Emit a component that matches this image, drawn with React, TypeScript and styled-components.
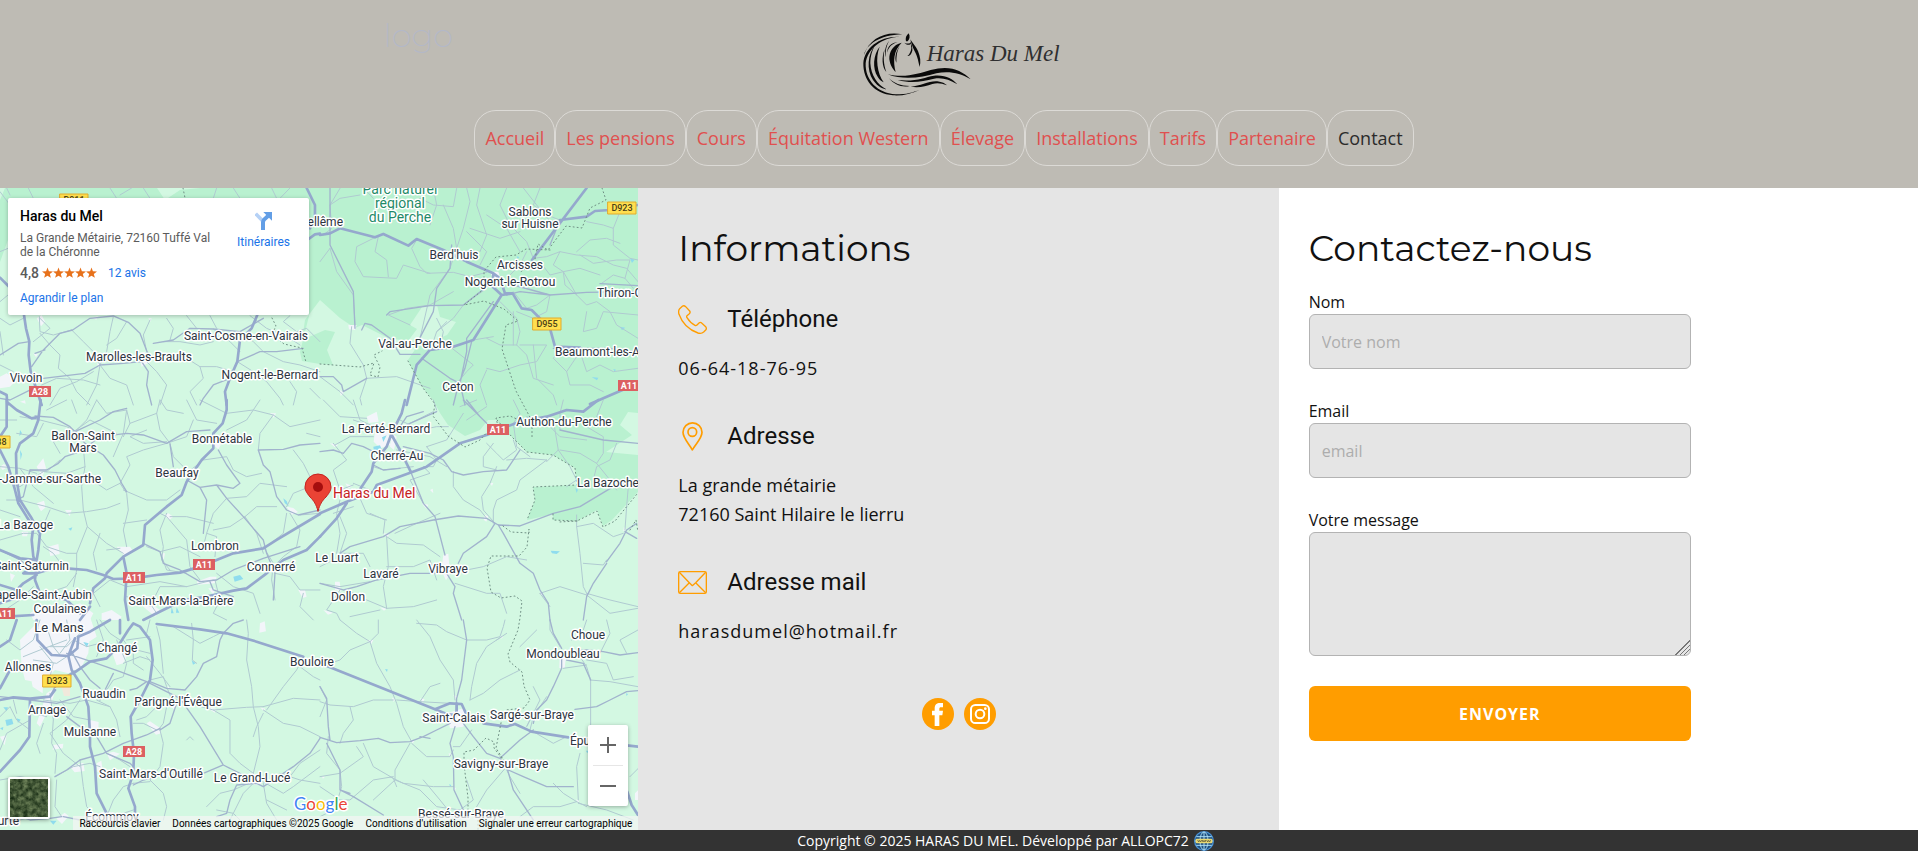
import React from "react";
import styled, { createGlobalStyle } from "styled-components";

const GlobalStyle = createGlobalStyle`
  *, *::before, *::after { box-sizing: border-box; }
  body {
    margin: 0;
    background: #fff;
    color: #111;
    font-family: "Open Sans", "Noto Sans", sans-serif;
    font-size: 16px;
  }
  h1, h2, h3, p { margin: 0; font-weight: 400; }
  a { color: inherit; text-decoration: none; }
`;

const ORANGE = "#ff9d00";

/* ---------- header ---------- */

const Header = styled.header`
  display: grid;
  grid-template-columns: 1fr auto 1fr;
  row-gap: 5px;
  padding: 20px 0 22px;
  background: #bebbb4;
`;

const SiteMark = styled.a`
  justify-self: start;
  padding-left: 20vw;
  color: #b3b8c8;
  font: 200 32px/32px Montserrat, Inter, sans-serif;
`;

const Brand = styled.a`
  display: block;
  grid-column: 2;
  height: 85px;
`;

const Nav = styled.nav`
  grid-column: 1 / -1;
  display: flex;
  flex-wrap: wrap;
  justify-content: center;
  padding-right: 30px;
`;

const NavLink = styled.a<{ $current?: boolean }>`
  padding: 0 10px;
  border: 1px solid #dcdad6;
  border-radius: 22px;
  color: ${(p) => (p.$current ? "#2b2b2b" : "#e0504f")};
  font-size: 18px;
  line-height: 54px;
`;

/* ---------- three columns ---------- */

const Columns = styled.main`
  display: grid;
  grid-template-columns: repeat(3, 1fr);
  min-height: 642px;
`;

const Info = styled.section`
  padding: 38px 39px;
  background: #e5e5e5;
`;

const Contact = styled.section`
  padding: 38px 30px;
  background: #fff;
`;

const Title = styled.h2`
  font: 400 36px/44px Montserrat, Inter, sans-serif;
  color: #111;
`;

const InfoBlock = styled.div<{ $first?: boolean }>`
  margin-top: ${(p) => (p.$first ? 34 : 38)}px;
`;

const InfoHead = styled.div`
  display: flex;
  align-items: center;
  gap: 20px;
  height: 30px;
`;

const InfoTitle = styled.h3`
  font: 400 24px/30px Roboto, sans-serif;
`;

const InfoText = styled.p<{ $spaced?: boolean }>`
  margin-top: 20px;
  font-size: 18px;
  line-height: 29px;
  letter-spacing: ${(p) => (p.$spaced ? "1px" : "normal")};
`;

const Social = styled.div`
  display: flex;
  justify-content: center;
  gap: 10px;
  margin-top: 52px;
`;

const SocialLink = styled.a`
  display: block;
  width: 32px;
  height: 32px;
`;

const Form = styled.form`
  display: flex;
  flex-direction: column;
  gap: 30px;
  width: 66%;
  margin-top: 20px;
`;

const Field = styled.div`
  display: flex;
  flex-direction: column;
`;

const Label = styled.label`
  font-size: 16px;
  line-height: 24px;
`;

const Input = styled.input`
  width: 100%;
  height: 55px;
  padding: 0 12px;
  border: 1px solid #b3b3b3;
  border-radius: 6px;
  background: #e5e5e5;
  color: #111;
  font: inherit;
  &::placeholder { color: #adadad; opacity: 1; }
`;

const TextArea = styled.textarea`
  display: block;
  width: 100%;
  height: 124px;
  padding: 10px 12px;
  border: 1px solid #b3b3b3;
  border-radius: 6px;
  background: #e5e5e5;
  color: #111;
  font: inherit;
  &::-webkit-resizer {
    background: linear-gradient(
      135deg,
      transparent 50%, #777 50%, #777 55%,
      transparent 55%, transparent 64%, #777 64%, #777 69%,
      transparent 69%, transparent 78%, #777 78%, #777 83%, transparent 83%
    );
  }
`;

const Submit = styled.button`
  height: 55px;
  border: 0;
  border-radius: 6px;
  background: ${ORANGE};
  color: #fff;
  font: 700 16px/24px "Open Sans", sans-serif;
  letter-spacing: 1px;
`;

const Footer = styled.footer`
  display: flex;
  align-items: center;
  justify-content: center;
  gap: 5px;
  height: 21px;
  padding-left: 93px;
  background: #333;
  color: #fff;
  font-size: 14px;
  line-height: 22px;
`;

/* ---------- map ---------- */

const MapFrame = styled.section`
  position: relative;
  overflow: hidden;
  border-right: 1px solid #e5e5e5;
  background: #d3f8e2;
  font-family: Roboto, sans-serif;
`;

const MapCanvas = styled.svg`
  position: absolute;
  inset: 0;
  width: 100%;
  height: 100%;
`;

const PlaceCard = styled.div`
  position: absolute;
  top: 10px;
  left: 8px;
  display: flex;
  justify-content: space-between;
  width: 301px;
  height: 117px;
  padding: 9px 19px 9px 12px;
  border-radius: 2px;
  background: #fff;
  box-shadow: 0 1px 4px rgba(0, 0, 0, 0.25);
  color: #5b5b5b;
  font-size: 12px;
  line-height: 14px;
`;

const PlaceText = styled.div`
  width: 194px;
`;

const PlaceName = styled.h2`
  margin-bottom: 6px;
  color: #000;
  font: 500 14px/18px Roboto, sans-serif;
`;

const Rating = styled.div`
  display: flex;
  align-items: center;
  height: 14px;
  margin: 7px 0 11px;
`;

const Score = styled.span`
  margin-right: 3px;
  font-size: 14px;
  font-weight: 500;
`;

const MapLink = styled.a`
  color: #1a73e8;
`;

const Reviews = styled(MapLink)`
  margin-left: 11px;
`;

const Directions = styled(MapLink)`
  display: flex;
  flex-direction: column;
  align-items: center;
  gap: 5px;
  padding-top: 5px;
`;

const ZoomBox = styled.div`
  position: absolute;
  right: 10px;
  bottom: 24px;
  width: 40px;
  background: #fff;
  border-radius: 2px;
  box-shadow: 0 1px 4px rgba(0, 0, 0, 0.3);
`;

const ZoomButton = styled.button`
  display: flex;
  align-items: center;
  justify-content: center;
  width: 40px;
  height: 40px;
  padding: 0;
  border: 0;
  background: none;
`;

const ZoomRule = styled.div`
  height: 1px;
  margin: 0 5px;
  background: #e6e6e6;
`;

const Satellite = styled.button`
  position: absolute;
  left: 8px;
  bottom: 11px;
  width: 42px;
  height: 42px;
  padding: 0;
  overflow: hidden;
  border: 2px solid #fff;
  border-radius: 2px;
  background: #41573f;
  box-shadow: 0 1px 4px rgba(0, 0, 0, 0.4);
`;

const Credits = styled.div`
  position: absolute;
  right: 0;
  bottom: 0;
  display: flex;
  height: 14px;
  background: rgba(245, 245, 245, 0.7);
  color: #000;
  font-size: 10px;
  line-height: 16px;
  white-space: nowrap;
`;

const CreditButton = styled.button`
  padding: 0 6px;
  border: 0;
  background: none;
  color: inherit;
  font: inherit;
`;

const Credit = styled.span`
  padding: 0 6px;
`;

/* Road tiles: every tile is drawn at three units per pixel. */
type Tile = {
  x: number;
  y: number;
  urban: string;
  water?: string;
  minor: string;
  mid: string;
  major: string;
};

const TILES: Tile[] = [
  {
    x: 0,
    y: 185,
    urban: "M0,575l20,-10l30,20l-20,20l-30,5zM110,400l15,-10l10,20l-12,14zM275,398l20,-4l-6,10zM445,400l10,0l-4,10zM415,505l20,-5l15,30l-25,15zM60,650l15,-4l2,10zM290,535l16,2l-8,12zM100,505l14,2l-6,10z",
    minor:
      "M0,20L30,60M20,9L30,30M85,9L100,40M330,9L350,40M360,30L395,9M430,9L450,40M640,40L650,9M700,9L720,40M815,9L830,40M840,40L870,9M0,200L24,190M0,350L24,330M118,395L120,440L160,450L215,435M0,400L30,420L70,400M10,510L0,440M120,445L150,480L180,510L175,550L210,580L230,620L270,660M215,435L250,470L280,500L300,540L290,600L260,660M340,395L330,440L320,500L300,540L330,580L380,600L400,660M150,660L180,610L230,590L280,560M450,405L430,450L440,500L480,530L560,520L600,545L610,580L570,620L590,660M430,520L470,560L500,600L480,660M490,470L540,470L600,480L640,470M720,440L760,470L790,500L850,530L900,540L960,560M720,500L690,470L640,432M750,392L800,430L870,460L900,480M700,560L650,545L600,545M712,530L760,560L800,590L840,640L850,660M870,392L850,410L890,440L920,430L960,470M100,470L150,430L120,400M125,600L170,580L250,585L300,600M0,540L40,560M380,410L350,460L320,480M500,400L520,430L510,465M560,392L590,430M630,392L650,430M870,590L890,620L880,660M930,610L960,640",
    mid: "M95,545L130,495L180,445L218,435L270,400L340,393L385,412L420,445L445,510M460,475L520,465L570,430L640,432L720,440L790,400M0,510L55,475L88,470M105,505L135,495M425,530L370,535L300,540L255,565L130,580M425,530L445,560L440,600L455,660M690,580L640,600L610,640L600,660M712,530L780,500L830,500L910,490M0,640L30,645L100,610",
    major: "M0,278L28,306M72,390L78,430L88,470L86,510L92,560L105,600L125,660M920,9L945,60L945,100L930,130M922,165L945,148L960,146M772,390L755,430L720,465L712,530L690,580L675,620L680,660M0,620L20,630L22,660",
  },
  {
    x: 320,
    y: 185,
    urban: "M85,420l25,0l-5,15l-18,-2zM60,615l12,8l-10,10zM290,455l25,8l-10,20l-22,-6zM510,260l25,0l10,30l-20,4z",
    water: "M930,220l14,4l-8,10zM900,425l16,3l-10,8zM880,552l8,2l-4,6zM815,576l20,2l-4,8zM590,214l8,2l-5,6z",
    minor:
      "M60,10L30,60L35,130L10,150M30,60L60,40L120,30M130,9L160,40M270,65L300,40L340,60L400,65L410,10M440,9L450,50L430,130L410,190L390,250L330,330L300,460M175,155L165,200L200,225L205,275M190,145L110,185L105,230L130,275L230,280L250,240L330,265M290,165L275,190L300,245L320,265L400,262L450,275L500,262M340,9L350,60L330,120M370,60L400,130L410,190M480,9L470,60L500,150L480,200M500,90L560,130L600,200M560,9L540,60L570,120L620,170L640,220M450,130L540,160L600,140M610,9L650,60L700,120M660,9L640,60L680,90L720,105M640,220L680,215L720,200L770,210L830,215L880,240L920,250L954,290M660,230L690,270L730,260L780,250L840,270M720,200L700,240L730,260L735,300L770,330M770,200L810,165L860,160L900,175M800,110L850,120L880,130L880,180L930,220L954,225M880,130L900,80M780,210L820,235L890,225L930,225L915,280L940,310M845,295L880,270L915,280M690,330L680,380L640,400L590,380M580,320L620,370L650,360L690,330M730,260L770,330L800,360L830,350L870,380L890,420L954,460M540,350L590,400L600,440L590,480L620,510L640,580L700,600M580,380L580,480M600,480L680,480L650,530L600,540L540,560L500,550M640,480L650,580L700,630L710,660M780,500L740,560L750,600L810,600L850,620M780,500L800,560L840,540L880,560L954,550M740,560L700,520L720,490M800,380L790,440L830,430L850,380L954,390M500,460L540,480L590,480M460,465L520,455M390,485L460,540L440,560L415,590M270,420L205,390L260,370L330,360L400,320M350,440L400,400L430,360L500,310M340,470L350,440L380,410M30,190L50,260L100,330L105,420M0,230L30,190M95,425L90,475L130,540L140,580L120,640L125,660M0,575L60,620L100,660M140,580L230,575L330,610M360,490L370,440L350,400M500,555L480,600L500,660M440,140L500,200L480,240M570,270L600,240L620,200",
    mid: "M125,435L135,415L155,420L210,460L240,508L300,508M305,520L390,580L420,595L435,660M520,350L440,460L440,500L420,595M0,575L40,575L65,600L70,620L140,580M580,300L690,330L800,322L954,320M720,105L690,180M560,330L600,320L690,330M840,296L954,302M400,660L415,600L435,550L455,470M954,500L870,490L790,490L700,490M200,390L210,380L330,362L430,360L500,305L520,300M30,9L30,130L30,180L100,320L105,430M300,458L340,380L350,310L390,250L395,180",
    major: "M0,150L30,145L60,130L165,157L190,147L265,182L290,162L370,195L440,230L520,265L518,305L545,330L460,465L400,485L330,495L290,540L260,660M520,265L540,280L555,325L578,325L605,370L635,375L690,430L705,485L780,488M545,330L578,325M636,225L800,9M720,105L800,95L825,78L870,75L920,65L954,60M810,657L954,595",
  },
  {
    x: 0,
    y: 400,
    urban:
      "M110,200l20,-25l8,30l-12,25zM110,310l22,-8l5,20l-14,12zM145,440l30,-8l4,30l-28,6zM195,330l20,0l-6,18zM350,440l40,0l10,15l-30,10zM485,460l10,0l-4,20zM490,345l15,-5l15,10l-12,10zM810,40l18,0l-6,14zM590,545l40,-15l20,0l-6,20l-50,4zM100,660l-10,-20l30,-20l60,10l60,-20l40,30l-10,20zM895,570l20,0l5,20l-12,4zM860,320l20,4l14,12l-18,8zM305,640l30,-10l30,20l-6,10l-54,0zM635,130l30,0l-10,18zM0,200l12,-8l10,10l-14,8zM65,395l20,0l-4,14l-14,0zM30,520l15,6l-12,20zM430,620l20,-10l30,20l-14,20zM625,565l20,0l-4,20zM575,590l20,2l-10,12z",
    water: "M700,530l20,-5l10,12l-26,8zM850,295l10,8l6,16l-12,-10zM515,620l6,20l-8,0zM530,622l8,16l-10,0zM60,90l6,10l-8,8zM60,150l6,12l-4,18zM205,386l12,-4l-4,10z",
    minor:
      "M140,30L200,0M215,0L230,40M290,0L320,40L380,30L390,70L370,110M390,70L470,40L480,0M470,40L480,90L510,130L520,170L550,200M550,40L500,30L480,0M440,90L390,110L430,130L500,125M350,100L270,60L200,110L160,125L180,160M230,95L200,80L120,60L60,50M50,100L110,110L130,70M250,140L255,200L245,260L250,330L262,380L230,460L230,510L220,560M255,200L200,220L130,215L60,260L30,250M180,180L140,215L90,210M0,200L60,205L110,220M290,0L260,60L230,90M340,170L370,100L380,30M360,250L380,280L385,330L370,390L380,440M360,250L320,270L260,230M360,310L320,325L260,335L200,340L140,320L60,300L20,300M360,250L390,195L380,170L430,150L500,130M370,270L440,300L500,300L540,270M370,370L440,360M500,340L480,390L490,440L485,480L510,510M480,340L500,350L560,420L570,500L600,540M440,440L480,455L540,440L600,470M480,455L500,510L560,520M560,220L610,180L680,170L700,210L740,230L785,220M580,60L560,110L500,130M560,0L590,60L650,70M600,0L680,40L760,30L820,45L870,80L960,60M820,45L780,100L775,150M880,150L910,190L930,230M680,90L740,60L780,0M680,295L740,290L780,250L860,260M680,295L640,340L620,400L610,440M620,400L650,410L645,470M735,350L690,380L640,390M735,350L770,400L790,460M735,350L770,320L830,320M860,340L850,400L800,440M870,340L900,390L890,440L850,470L830,490M860,320L880,280L930,260M900,345L960,340M640,370L560,350L510,350M790,440L820,490L815,540L825,600M825,520L870,530L900,570L960,570M910,580L900,620L940,660M650,520L700,560L760,580L780,640M645,540L660,600L640,640L680,660M450,620L480,560L560,560L640,540M470,640L450,610L380,590M230,520L200,560L140,580M0,330L60,350M0,420L70,400L110,400L140,440L200,460L230,460M130,440L160,460L190,500M300,400L280,460L290,510M320,450L360,445M262,380L320,430L370,460M0,60L50,60M60,205L100,260L160,310M120,400L150,330M300,620L280,580L330,540L380,560L480,545L560,560M920,100L960,110M0,640L60,600L100,560",
    mid: "M105,48L160,52L210,80L225,95L255,130L310,165L345,210L365,250L380,275M225,95L300,60L340,35L380,25M380,100L300,110L240,155L195,170L175,190L140,210L90,210L70,290L50,300M380,100L430,105L500,130L560,95L630,90M510,132L520,200M655,150L680,195L720,250L700,265L650,255L600,262L560,240M600,262L620,300L610,400M650,255L680,295L730,350L790,420L800,460L825,520L820,600M775,150L850,148L900,135L960,130M775,150L790,195L810,215L830,290L860,330L895,345L960,330M430,430L480,455L490,490L540,510L600,545L650,540L700,510L790,475L900,440M630,545L640,570L700,590M0,450L60,480L100,510",
    major:
      "M20,0L20,80L0,110M20,5L50,30L95,55L110,52M122,0L115,60L100,100L60,130L48,160L50,240L60,300L95,355L120,400L115,450L110,480M0,150L25,200L45,270L55,310L80,350L100,380L95,420L100,470L110,490L105,540L120,580L200,600L240,640M0,450L60,475L110,480M110,490L70,520L110,520L150,508L200,505L260,510L310,525L340,537L400,535L470,525L540,518L600,500L700,460L790,445L830,420L960,342M0,555L50,570L70,550L110,525M680,0L680,30L668,70L640,100L640,145L605,180L560,245L545,285L500,320L435,375L430,435L370,470L320,520L315,535L280,565L270,610M370,470L380,520L375,600L385,660M960,410L920,450L850,480L800,520L740,565L700,572L620,590L550,600L470,640L430,660M270,620L240,660M0,610L30,600L100,580M20,650L100,645",
  },
  {
    x: 320,
    y: 400,
    urban:
      "M140,50l30,-15l6,30l-30,4zM165,95l40,0l6,40l-30,10l-20,-20zM215,100l15,10l-8,40l-12,-10zM370,465l15,-4l5,60l-12,20l-14,-30zM330,270l8,-4l2,14zM305,310l20,4l-6,12zM190,400l18,2l-6,12zM495,345l10,4l-6,16l-8,-6zM45,545l14,0l4,30l-18,-6zM30,130l25,4l-10,8zM510,250l10,-2l-4,10zM10,630l30,8l-16,6zM180,622l20,4l-8,6zM660,575l10,4l-6,8zM76,250l20,8l-10,8zM912,380l6,10l-8,4z",
    water: "M160,140l20,-4l6,14l-24,4zM186,112l14,-6l-10,20zM692,452l28,2l-10,8l-14,-2zM766,265l8,4l-4,10z",
    minor:
      "M10,0L60,50L140,55M100,0L120,60L160,80M40,130L80,180L40,210L60,270L100,255M45,135L90,110L160,110M150,270L100,250M60,300L50,340L60,400L50,460M120,295L140,340L200,360M100,320L40,340M150,340L195,360L190,400M200,410L205,500L190,560L200,625M60,460L80,400L60,350M200,410L230,430L310,435L360,470M225,400L290,370L360,340M160,200L190,210L280,200M230,150L330,170L380,200M270,70L340,35M240,60L300,90L350,80L385,80M160,80L100,60M320,140L380,120L430,40M320,140L350,180M400,215L400,260L430,300L480,330L500,355M350,180L340,200L310,200L330,220L270,240L310,310M530,200L510,250L485,290L490,330L525,370M500,130L530,160L550,180L590,150L580,120M520,130L490,170L490,200L530,210M560,180L620,175L680,180M680,180L600,240L590,270L530,300L520,330L520,370M440,60L500,20M580,0L600,40L580,70L590,140L630,170M700,60L715,150L680,185M715,150L750,200L770,240M620,50L680,70L720,110L800,120M770,240L740,260M890,130L870,180L830,200L820,240M720,150L780,160L830,190L870,240L890,270M800,80L850,110L850,160L830,190M730,0L720,40L720,90M770,345L770,380L780,460L790,560L800,580M770,380L820,370L880,410L910,400M790,490L850,495L860,480M915,390L920,320L925,260M440,510L490,500L560,470L620,480M60,460L130,460L150,500M0,550L60,560L150,545M60,570L40,600L20,630L50,640L60,660M200,625L280,620L350,600M200,625L140,600L80,570M405,550L500,580L540,580L560,640M660,580L720,560L800,585M800,580L870,600L954,620M800,585L870,640L954,625M660,580L690,620M0,500L40,480M340,0L350,30M420,20L470,0M90,650L180,630M850,0L830,50M350,540L330,480L280,500L200,500",
    mid: "M0,155L40,150L70,160L95,130L130,140L160,155L200,160M310,35L260,50L240,80M350,35L270,70L215,100M270,210L310,310L345,350L375,465M60,460L90,440L190,410L240,380L340,360L415,348L500,355L535,375L600,378L700,340L780,320L880,260L954,240M535,375L550,400L600,490L640,520L660,570L685,610L690,660M380,520L405,560L400,580L425,660M525,370L500,410L430,460L415,490M350,520L270,520L170,540L110,560L70,570L0,550M860,490L820,550L800,590L790,660M860,485L900,430L920,390L950,370M915,395L950,415M395,215L430,225L490,215L560,210L600,150M250,140L330,160L370,180L395,215M430,0L500,70M720,90L850,120L954,130M160,195L190,210L240,205M440,0L480,50",
    major:
      "M0,340L80,305L160,275L170,255L320,200L420,130L500,105L560,80L600,65L680,50L740,30L790,35L835,0M0,410L50,355L80,310M255,0L245,40L215,100L200,140L160,190L155,215L120,268M215,105L240,150L272,215",
  },
  {
    x: 0,
    y: 620,
    urban:
      "M60,60l60,-60l120,0l30,40l-5,60l-20,40l-40,20l-40,-10l-40,40l-50,-10l-10,-40zM240,0l30,-10l20,60l-30,20zM140,220l30,-20l-20,60l-30,60l-10,-10zM270,300l26,6l-2,40l-24,0zM290,430l14,-8l4,30l-16,4zM160,375l30,-4l-2,14l-30,4zM320,400l20,-5l20,6l-30,20zM210,440l40,-12l4,25l-30,4zM0,350l20,-4l-6,30zM440,310l10,-6l30,20l4,16l-16,4zM780,10l14,-6l4,30l-20,4zM330,80l60,10l-20,40l-20,6zM510,255l14,0l0,16zM620,262l30,4l-6,12zM755,460l24,4l4,30l-20,0zM90,160l40,10l-2,50l-30,-20zM170,596l24,-18l12,10l-20,24zM500,200l8,0l-2,8zM780,262l16,4l-4,8zM300,575l40,2l0,20z",
    water: "M10,262l14,0l-4,12zM16,300l20,-4l4,16l-20,6zM50,295l12,4l-8,10zM0,325l10,-4l-2,10zM150,602l20,0l-10,12zM250,66l16,4l-6,12zM575,120l12,10l-8,4z",
    minor:
      "M120,0L100,60L60,90L20,60M70,110L120,90L200,60M140,20L160,80L180,105M200,0L210,60L180,100M100,120L170,130L200,110M120,80L160,130L150,170M240,40L200,80L150,80M220,60L260,80L300,70M300,0L330,40L360,60M290,0L310,60L290,110M370,60L400,100L400,130L430,150M380,60L450,50M370,100L410,90L450,100M350,60L380,130L370,170L340,180L300,240M370,130L420,110L450,120M450,180L490,170L500,200L520,250M440,110L480,160L510,200M450,0L440,40M470,20L480,60L490,160M520,20L600,70L640,50L660,40M575,10L580,60L577,120L590,130M740,0L745,40L740,120L755,200L760,260L775,320L780,380L760,460M910,110L890,150L850,200L800,270M900,140L940,170L960,180M790,260L880,235L960,240M790,270L850,310L900,320L960,350M790,280L770,320L760,350M790,260L740,262L640,270L530,240M640,270L690,300L690,400L720,430L760,460M530,240L500,260L490,310L475,330M520,240L480,250L440,290L410,300M480,330L490,370L480,440L450,480L490,520L500,560L490,600M470,330L430,310L400,310M400,490L450,485M360,350L350,300L330,260L290,240M330,260L260,240L210,250L130,240M150,220L160,300L155,370L170,400L165,460M240,240L200,300L150,340L190,400L240,440M270,300L220,290L180,240M130,310L110,370L120,400M0,390L20,340L90,300M0,290L30,260L50,300L90,330M40,240L50,280M100,280L140,290M165,470L220,440L270,430L300,440M170,480L165,560L185,590M240,420L250,500L260,560L300,600M320,590L340,540L370,500L400,490M320,400L360,420L390,440M340,590L400,570M620,560L660,520L700,510L770,480M770,480L730,520L690,600M790,490L800,550L830,600M780,480L850,520L880,500L960,440M870,470L900,430L960,390M650,570L700,580L720,600M560,360L570,350L580,360M840,460L900,480L960,490M0,480L60,470L120,480M60,600L100,590L150,595M800,540L860,570",
    mid: "M200,100L290,130L360,155L440,185L540,235L600,320L670,435L760,480M215,95L240,140L270,180L300,205M440,185L410,205L390,210M450,185L500,205L555,210L590,170L610,130L650,110L660,60L670,40L700,10L730,0M300,240L330,180L340,160M240,230L170,250L90,240M490,240L530,250M480,325L440,345L370,370L310,400L240,420L200,450L165,470M200,290L240,320L290,350L320,400L390,430L400,440M610,460L670,435L690,445M770,490L710,495L690,540L680,580L650,590M770,490L790,500L820,480L880,440L930,400L960,355M480,330L510,310L530,250M0,230L90,240L150,230L165,200M185,590L150,595L90,600L60,590M400,495L430,480L470,470M190,590L240,600",
    major:
      "M0,80L30,60L50,0M30,150L0,205M0,240L40,232L90,236L150,230L165,210M90,236L88,350L60,390L0,455M110,0L112,60L155,105L205,108L232,85L235,50L270,35L330,0M205,108L215,150L240,190L265,260L270,340L270,380L285,440L290,520L320,580L330,600M220,160L270,125L320,115L350,85L385,30L400,10L420,20L450,60L458,120L450,180L420,240L392,290L395,340L402,400L400,460L385,505L405,560L405,600M470,12L600,28L680,40L770,65L910,110M360,0L360,40M225,55L205,108M165,200L200,170L225,155",
  },
  {
    x: 320,
    y: 620,
    urban: "M140,60l20,0l-6,12zM300,235l14,2l-6,12zM400,225l12,4l-4,12zM380,280l50,-15l10,20l-10,35l-40,5zM720,90l20,4l-6,50l-16,0zM386,400l10,2l-6,8zM398,500l10,4l-4,10zM945,520l10,-10l0,30l-10,0zM768,538l10,4l-4,6zM270,358l14,4l-6,8zM5,468l10,2l-6,6zM540,46l10,4l-6,6zM215,232l10,6l-4,8zM415,570l20,4l-6,12z",
    water: "M195,148l8,0l-2,8zM798,392l8,0l-4,8zM918,220l6,2l-4,6zM388,492l6,4l-4,4z",
    minor:
      "M60,0L110,40L150,65M150,65L175,40L175,0M150,65L90,90L60,120L0,140M150,65L170,130L210,200L230,250L250,320L275,365M290,0L330,50L360,120L400,180L405,240M290,10L350,15L380,35L440,60M440,60L500,60L540,50L550,20L555,0M545,50L500,80L470,130L455,200L450,240M450,240L490,220L540,180L580,160L600,150M230,240L300,245L390,250M300,245L330,200L360,190M0,245L30,255L100,260L160,240L220,240M90,260L100,300L70,340L60,370M25,350L20,400L60,450L65,500L50,550L70,560M130,370L160,440L220,475L230,500M270,370L225,450L225,480L160,540M210,470L250,490L340,500L400,500M275,370L320,410L390,410L400,390M0,470L60,460L130,410L110,380M0,500L60,540L90,540L160,480L220,470M0,590L60,560M225,480L300,510L350,560L420,570M440,480L460,540L420,570M455,330L420,380L400,380M540,410L570,470L600,520M560,440L500,510L470,560M640,200L660,240L620,320L630,300M680,230L640,290L630,330M690,0L690,30L720,80M755,60L790,30L800,0M800,120L860,130L880,180L940,170M810,180L870,185L954,200M780,110L800,140L812,180L812,320M730,145L800,135M640,335L700,370L740,350M780,400L770,440L775,540M700,490L730,520L770,545L800,560M960,440L930,470M530,60L560,40M650,30L600,80M840,100L870,40L860,0M920,100L900,60L954,30M770,545L720,560L640,560L600,590M775,550L860,570L940,600M310,480L360,540L400,590M0,290L20,240L0,200",
    mid: "M430,0L440,60L425,180L410,235L408,280M0,200L20,235L25,320L30,360M0,352L50,368L120,362L175,355L210,368L270,365L310,350L350,330L390,310M60,510L100,530L190,585M20,370L60,450L60,510L90,520M405,320L390,370L400,410L402,510L430,570M430,310L460,350L500,400L540,415L560,440L580,510L640,600M540,415L600,360L640,330M565,450L610,470L680,500L760,500M725,100L725,145L700,200L680,240L650,270L640,310M690,0L700,40L725,85M745,95L800,90L850,95L900,105L954,98M765,268L830,260L870,240L920,215L954,212M740,120L790,130L812,180M330,355L300,350",
    major: "M0,130L345,268L380,282L408,285M345,268L390,250L425,252L438,280M410,250L410,285M490,310L560,320L585,312L635,335L745,352M920,376L954,380M922,515L935,555L954,585",
  },
];

const PARK =
  "M5,188L157,188L165,200L180,190L200,188L638,188L638,413L628,412L620,425L632,435L606,452L638,455L638,492L612,520L603,526L597,510L577,521L553,520L553,514L527,520L535,500L533,487L577,485L575,468L553,455L527,452L512,437L497,420L488,420L480,430L465,436L448,425L440,413L433,400L423,388L412,369L408,360L418,345L433,341L447,335L456,322L440,317L437,305L422,307L410,325L417,329L408,341L388,338L362,325L355,328L340,318L320,300L305,320L302,340L325,330L335,332L327,350L333,365L320,364L302,361L300,352L309,316L309,300L240,280L160,240L8,240L0,262L0,200z";

const BORDERS =
  "M602,188l4,12l-16,8l-8,20l-16,-2l-18,24l-10,-6l-4,20l-14,8M550,250l-24,-1l-10,6l-20,2l-12,14l0,18l-20,16l20,-4l20,8l14,12l-12,4l-4,24l14,42l16,30l0,18M320,364l40,3l14,-4l-4,12l8,2l2,-10l-6,-12l8,-4M408,361l15,27l12,16l-2,12l15,20l17,11l15,-7l9,-10l10,0l-3,-12l14,-2l18,8M497,420l15,17l15,15l26,3l22,13l2,17l-44,2l2,13l-8,20M577,521l-18,1M553,514l0,6l24,1l20,-10l6,16l12,-6l22,-27M503,526l8,6l18,1l0,-4l-2,18l-8,9l-28,0l-4,12l4,24l10,6l14,-2l7,5l-2,17l-2,12l-10,24l2,8l12,10l2,14l6,14l-6,8l-18,2l-4,8l-6,30l10,16l-12,-16l0,-6l-8,-4l-12,12l-10,2l0,12l4,34l0,14l10,8l0,18M183,188l2,10M272,318l4,8l-4,8l12,10l18,4l4,14M630,530l6,-10l2,12";

const LAYERS: { key: "minor" | "mid" | "major"; color: string; width: number }[] = [
  { key: "minor", color: "#b0cad1", width: 3 },
  { key: "mid", color: "#a1b3cd", width: 4 },
  { key: "major", color: "#95a8cd", width: 8 },
];

type Anchor = "start" | "middle" | "end";
const PLACES: [string, number, number, Anchor?][] = [
  ["Saint-Cosme-en-Vairais", 246, 340],
  ["Marolles-les-Braults", 139, 361],
  ["Nogent-le-Bernard", 270, 379],
  ["Vivoin", 26, 382],
  ["Bellême", 343, 226, "end"],
  ["Sablons", 530, 216],
  ["sur Huisne", 530, 228],
  ["Berd'huis", 454, 259],
  ["Arcisses", 520, 269],
  ["Nogent-le-Rotrou", 510, 286],
  ["Thiron-Gardais", 597, 297, "start"],
  ["Val-au-Perche", 415, 348],
  ["Beaumont-les-Autels", 555, 356, "start"],
  ["Ceton", 458, 391],
  ["Ballon-Saint", 83, 440],
  ["Mars", 83, 452],
  ["Bonnétable", 222, 443],
  ["Beaufay", 177, 477],
  ["Sainte-Jamme-sur-Sarthe", 101, 483, "end"],
  ["La Bazoge", 53, 529, "end"],
  ["Lombron", 215, 550],
  ["Connerré", 271, 571],
  ["Saint-Saturnin", 69, 570, "end"],
  ["La Chapelle-Saint-Aubin", 92, 599, "end"],
  ["Saint-Mars-la-Brière", 181, 605],
  ["Coulaines", 60, 613],
  ["Le Luart", 337, 562],
  ["La Ferté-Bernard", 386, 433],
  ["Cherré-Au", 397, 460],
  ["Authon-du-Perche", 564, 426],
  ["La Bazoche-Gouet", 577, 487, "start"],
  ["Vibraye", 448, 573],
  ["Lavaré", 381, 578],
  ["Dollon", 348, 601],
  ["Changé", 117, 652],
  ["Allonnes", 28, 671],
  ["Ruaudin", 104, 698],
  ["Parigné-l'Évêque", 178, 706],
  ["Arnage", 47, 714],
  ["Mulsanne", 90, 736],
  ["Saint-Mars-d'Outillé", 151, 778],
  ["Le Grand-Lucé", 252, 782],
  ["Écommoy", 112, 821],
  ["Courte", 19, 825, "end"],
  ["Bouloire", 312, 666],
  ["Choue", 588, 639],
  ["Mondoubleau", 563, 658],
  ["Saint-Calais", 454, 722],
  ["Sargé-sur-Braye", 532, 719],
  ["Épuisay", 570, 745, "start"],
  ["Savigny-sur-Braye", 501, 768],
  ["Bessé-sur-Braye", 461, 818],
];

const SHIELDS: [string, number, number][] = [
  ["A28", 29, 386],
  ["A11", 618, 380],
  ["A11", 123, 572],
  ["A11", 193, 559],
  ["A11", -7, 608],
  ["A11", 487, 424],
  ["A28", 123, 746],
  ["D911", 60, 194],
  ["D923", 608, 202],
  ["D955", 533, 318],
  ["D338", -18, 436],
  ["D323", 43, 675],
];

const GOOGLE: [string, string][] = [
  ["G", "#4285f4"],
  ["o", "#ea4335"],
  ["o", "#fbbc04"],
  ["g", "#4285f4"],
  ["l", "#34a853"],
  ["e", "#ea4335"],
];

function Shield({ code, x, y }: { code: string; x: number; y: number }) {
  const motorway = code[0] === "A";
  const w = motorway ? 22 : 28;
  return (
    <g transform={`translate(${x} ${y})`}>
      <rect width={w} height={motorway ? 11 : 12} fill={motorway ? "#dc6062" : "#ffdf4f"} stroke={motorway ? "none" : "#e2ac2d"} />
      <text x={w / 2} y="9" textAnchor="middle" fontSize="9" fontWeight={motorway ? 700 : 500} fill={motorway ? "#fff" : "#4a4016"}>
        {code}
      </text>
    </g>
  );
}

function RegionMap() {
  return (
    <MapCanvas role="img" aria-label="Carte autour du Haras du Mel">
      <g transform="translate(0 -188)" strokeLinejoin="round" strokeLinecap="round">
        <path d={PARK} fill="#b9f1d0" />
        {TILES.map((t) => (
          <g key={`${t.x}-${t.y}`} transform={`translate(${t.x} ${t.y}) scale(0.3333)`}>
            <path d={t.urban} fill="#f3f5fa" />
            {t.water && <path d={t.water} fill="#8fdcee" />}
          </g>
        ))}
        <path d="M59,678l11,0l0,18l-6,0z" fill="#f1e9dc" />
        {LAYERS.map((layer) =>
          TILES.map((t) => (
            <path
              key={`${layer.key}-${t.x}-${t.y}`}
              transform={`translate(${t.x} ${t.y}) scale(0.3333)`}
              d={t[layer.key]}
              fill="none"
              stroke={layer.color}
              strokeWidth={layer.width}
            />
          ))
        )}
        <path d={BORDERS} fill="none" stroke="#6f8f84" strokeWidth="1" strokeDasharray="1 3" />
        {SHIELDS.map(([code, x, y]) => (
          <Shield key={`${code}-${x}`} code={code} x={x} y={y} />
        ))}
        <g fill="#2d3440" stroke="#fff" strokeWidth="3" paintOrder="stroke" fontSize="12">
          {PLACES.map(([name, x, y, anchor]) => (
            <text key={name} x={x} y={y} textAnchor={anchor ?? "middle"}>
              {name}
            </text>
          ))}
          <text x="59" y="632" textAnchor="middle" fontSize="13">Le Mans</text>
          <g fill="#1f8a68" fontSize="14" textAnchor="middle">
            <text x="400" y="194">Parc naturel</text>
            <text x="400" y="208">régional</text>
            <text x="400" y="222">du Perche</text>
          </g>
          <text x="333" y="498" fontSize="14" fill="#c5221f">Haras du Mel</text>
          <text x="294" y="810" fontSize="17" fontFamily="Lato, sans-serif" fontWeight="400">
            {GOOGLE.map(([letter, color], i) => (
              <tspan key={i} fill={color}>{letter}</tspan>
            ))}
          </text>
        </g>
        <path
          d="M318,511C316,504 314,501 310,497C306,492 305,490 305,487A13,13 0 0 1 331,487C331,490 330,492 326,497C322,501 320,504 318,511z"
          fill="#ea4335"
          stroke="#c5221f"
        />
        <circle cx="318" cy="487" r="5" fill="#a50e0e" />
      </g>
    </MapCanvas>
  );
}

const STAR = "M6,0L7.5,4.1L12,4.3L8.5,7L9.7,11.3L6,8.9L2.3,11.3L3.5,7L0,4.3L4.5,4.1z";

function Stars() {
  return (
    <svg width="55" height="12" viewBox="0 0 60 12" role="img" aria-label="4,8 sur 5">
      {[0, 12, 24, 36, 48].map((x) => (
        <path key={x} d={STAR} transform={`translate(${x} 0)`} fill="#e7711b" />
      ))}
    </svg>
  );
}

function MapPanel() {
  return (
    <MapFrame>
      <RegionMap />
      <PlaceCard>
        <PlaceText>
          <PlaceName>Haras du Mel</PlaceName>
          <p>La Grande Métairie, 72160 Tuffé Val de la Chéronne</p>
          <Rating>
            <Score>4,8</Score>
            <Stars />
            <Reviews href="#avis">12 avis</Reviews>
          </Rating>
          <MapLink href="#plan">Agrandir le plan</MapLink>
        </PlaceText>
        <Directions href="#itineraires">
          <svg width="18" height="18" viewBox="3 0 54 54" aria-hidden="true">
            <path d="M5,5L27,28" stroke="#b5d1f6" strokeWidth="11" />
            <path d="M27,54L27,31Q27,26 31,22L42,12" fill="none" stroke="#629ee6" strokeWidth="12" />
            <path d="M28,0L54,0L54,26z" fill="#629ee6" />
          </svg>
          Itinéraires
        </Directions>
      </PlaceCard>
      <ZoomBox>
        <ZoomButton aria-label="Zoom avant">
          <svg width="16" height="16" viewBox="0 0 16 16"><path d="M8,0V16M0,8H16" stroke="#666" strokeWidth="2" /></svg>
        </ZoomButton>
        <ZoomRule />
        <ZoomButton aria-label="Zoom arrière">
          <svg width="16" height="16" viewBox="0 0 16 16"><path d="M0,8H16" stroke="#666" strokeWidth="2" /></svg>
        </ZoomButton>
      </ZoomBox>
      <Satellite aria-label="Vue satellite">
        <svg width="38" height="38" viewBox="0 0 38 38">
          <filter id="forest" colorInterpolationFilters="sRGB">
            <feTurbulence type="fractalNoise" baseFrequency="0.22" numOctaves="3" seed="4" />
            <feColorMatrix values="0.5 0 0 0 0.02  0.5 0 0 0 0.1  0.4 0 0 0 0.02  0 0 0 0 1" />
          </filter>
          <rect width="38" height="38" filter="url(#forest)" />
        </svg>
      </Satellite>
      <Credits>
        <CreditButton>Raccourcis clavier</CreditButton>
        <Credit>Données cartographiques ©2025 Google</Credit>
        <Credit as="a" href="#conditions">Conditions d'utilisation</Credit>
        <Credit as="a" href="#erreur">Signaler une erreur cartographique</Credit>
      </Credits>
    </MapFrame>
  );
}

/* ---------- drawings ---------- */

function BrandLogo() {
  return (
    <svg width="220" height="85" viewBox="0 0 660 255" role="img" aria-label="Haras Du Mel">
      <g fill="#0a0a0a">
        <path d="M160,43C110,32 60,55 45,105C52,75 90,45 160,43z" />
        <path d="M152,50C100,52 55,85 50,130C48,180 85,220 140,223C175,223 190,217 213,209C185,221 160,228 132,226C75,222 42,180 43,130C46,85 90,48 152,50z" />
        <path d="M80,74C55,100 52,150 72,180C88,203 105,207 112,208C85,195 66,165 64,130C64,108 70,88 80,74z" />
        <path d="M92,80C72,105 70,145 86,170C92,180 98,184 104,187C85,160 78,115 92,80z" />
        <path d="M107,88C98,110 98,140 112,156C104,135 102,110 107,88z" />
        <path d="M120,62C108,80 106,95 110,112C109,92 112,78 120,62z" />
        <path d="M146,66C125,68 115,82 114,98C120,80 128,72 146,66z" />
        <path d="M158,68C132,74 120,95 121,118C124,138 132,148 140,156C132,125 133,92 158,68z" />
        <path d="M152,78C140,95 136,115 142,128C142,108 144,92 152,78z" />
        <path d="M171,64C168,54 172,46 179,40C184,50 182,58 176,64z" />
        <path d="M184,58C188,66 200,78 207,93C214,110 216,125 212,141C207,120 205,108 197,94C192,84 188,72 186,66z" />
        <path d="M184,64C188,74 191,82 190,92C187,102 183,108 175,108C183,103 186,92 187,84z" />
        <path d="M166,68C174,72 182,72 187,66C186,76 176,78 166,68z" />
        <path d="M116,163C170,175 210,160 245,150C300,135 335,148 365,178C335,160 300,152 262,160C220,172 165,182 116,163z" />
        <path d="M146,180C200,186 225,172 255,167C290,164 310,176 325,193C300,178 280,172 255,176C220,184 190,192 146,180z" />
        <path d="M185,200C215,198 240,182 265,184C280,186 288,190 294,196C278,190 265,188 250,192C230,199 210,204 185,200z" />
        <path d="M120,175C135,190 155,198 182,198C160,204 135,194 120,175z" />
      </g>
      <text x="233" y="124" fill="#2f2f30" fontFamily="'Liberation Serif', serif" fontStyle="italic" fontSize="69">
        Haras Du Mel
      </text>
    </svg>
  );
}

function PhoneIcon() {
  return (
    <svg width="29" height="29" viewBox="0 0 87 87" fill="none" stroke={ORANGE} strokeWidth="4" strokeLinejoin="round" aria-hidden="true">
      <path d="M13,4Q18,0 23,5L35,18Q38,22 34,26L27,32Q25,35 27,38Q37,54 51,61Q54,63 57,60L63,54Q67,50 71,54L83,65Q87,70 83,75L77,81Q70,87 60,84Q18,70 3,28Q0,17 5,11z" />
    </svg>
  );
}

function PinIcon() {
  return (
    <svg width="29" height="29" viewBox="0 0 87 87" fill="none" stroke={ORANGE} strokeWidth="5" strokeLinejoin="round" aria-hidden="true">
      <path d="M43,84C36,68 15,50 15,31A28,28 0 0 1 72,31C72,50 51,68 43,84z" />
      <circle cx="43" cy="30" r="13" />
    </svg>
  );
}

function MailIcon() {
  return (
    <svg width="29" height="29" viewBox="0 0 87 87" fill="none" stroke={ORANGE} strokeWidth="4" strokeLinejoin="round" aria-hidden="true">
      <rect x="2" y="11" width="83" height="65" rx="5" />
      <path d="M4,13L34,44L43,53L53,44L83,13M4,74L34,44M83,74L53,44" />
    </svg>
  );
}

function FacebookIcon() {
  return (
    <svg width="32" height="32" viewBox="0 0 96 96" aria-hidden="true">
      <circle cx="48" cy="48" r="48" fill={ORANGE} />
      <path d="M38,84V52H30V38H38V31C38,20 44,15 54,15H63V28H57C53,28 52,30 52,33V38H63L61,52H52V84z" fill="#fff" />
    </svg>
  );
}

function InstagramIcon() {
  return (
    <svg width="32" height="32" viewBox="0 0 96 96" aria-hidden="true">
      <circle cx="48" cy="48" r="48" fill={ORANGE} />
      <g fill="none" stroke="#fff" strokeWidth="6">
        <rect x="21" y="21" width="54" height="54" rx="13" />
        <circle cx="48" cy="48" r="13" />
      </g>
      <circle cx="64" cy="32" r="4" fill="#fff" />
    </svg>
  );
}

function GlobeIcon() {
  return (
    <svg width="20" height="20" viewBox="0 0 60 60" aria-hidden="true">
      <circle cx="30" cy="30" r="28" fill="#1d4f80" stroke="#4b93d6" strokeWidth="4" />
      <g fill="none" stroke="#a9dcf5" strokeWidth="3">
        <ellipse cx="30" cy="30" rx="12" ry="27" />
        <path d="M30,3V57M7,17H53M7,43H53M3,30H57" />
      </g>
      <rect x="5" y="23" width="50" height="14" rx="3" fill="#e9d873" />
      <path d="M11,27l3,6l3,-5l3,5l3,-6M25,27l2,6l3,-5l3,5l2,-6M38,27l3,6l3,-5l3,5l3,-6" fill="none" stroke="#4b4a2c" strokeWidth="2" />
    </svg>
  );
}

/* ---------- page ---------- */

const PAGES = ["Accueil", "Les pensions", "Cours", "Équitation Western", "Élevage", "Installations", "Tarifs", "Partenaire", "Contact"];

export default function App() {
  return (
    <>
      <GlobalStyle />
      <Header>
        <SiteMark href="#accueil">logo</SiteMark>
        <Brand href="#accueil"><BrandLogo /></Brand>
        <Nav>
          {PAGES.map((page) => (
            <NavLink key={page} href="#page" $current={page === "Contact"}>{page}</NavLink>
          ))}
        </Nav>
      </Header>
      <Columns>
        <MapPanel />
        <Info>
          <Title>Informations</Title>
          <InfoBlock $first>
            <InfoHead><PhoneIcon /><InfoTitle>Téléphone</InfoTitle></InfoHead>
            <InfoText $spaced>06-64-18-76-95</InfoText>
          </InfoBlock>
          <InfoBlock>
            <InfoHead><PinIcon /><InfoTitle>Adresse</InfoTitle></InfoHead>
            <InfoText>La grande métairie<br />72160 Saint Hilaire le lierru</InfoText>
          </InfoBlock>
          <InfoBlock>
            <InfoHead><MailIcon /><InfoTitle>Adresse mail</InfoTitle></InfoHead>
            <InfoText $spaced>harasdumel@hotmail.fr</InfoText>
          </InfoBlock>
          <Social>
            <SocialLink href="#facebook" aria-label="Facebook"><FacebookIcon /></SocialLink>
            <SocialLink href="#instagram" aria-label="Instagram"><InstagramIcon /></SocialLink>
          </Social>
        </Info>
        <Contact>
          <Title>Contactez-nous</Title>
          <Form onSubmit={(e) => e.preventDefault()}>
            <Field>
              <Label htmlFor="nom">Nom</Label>
              <Input id="nom" type="text" placeholder="Votre nom" />
            </Field>
            <Field>
              <Label htmlFor="email">Email</Label>
              <Input id="email" type="email" placeholder="email" />
            </Field>
            <Field>
              <Label htmlFor="message">Votre message</Label>
              <TextArea id="message" />
            </Field>
            <Submit type="submit">ENVOYER</Submit>
          </Form>
        </Contact>
      </Columns>
      <Footer>
        <span>Copyright © 2025 HARAS DU MEL. Développé par ALLOPC72</span>
        <GlobeIcon />
      </Footer>
    </>
  );
}
